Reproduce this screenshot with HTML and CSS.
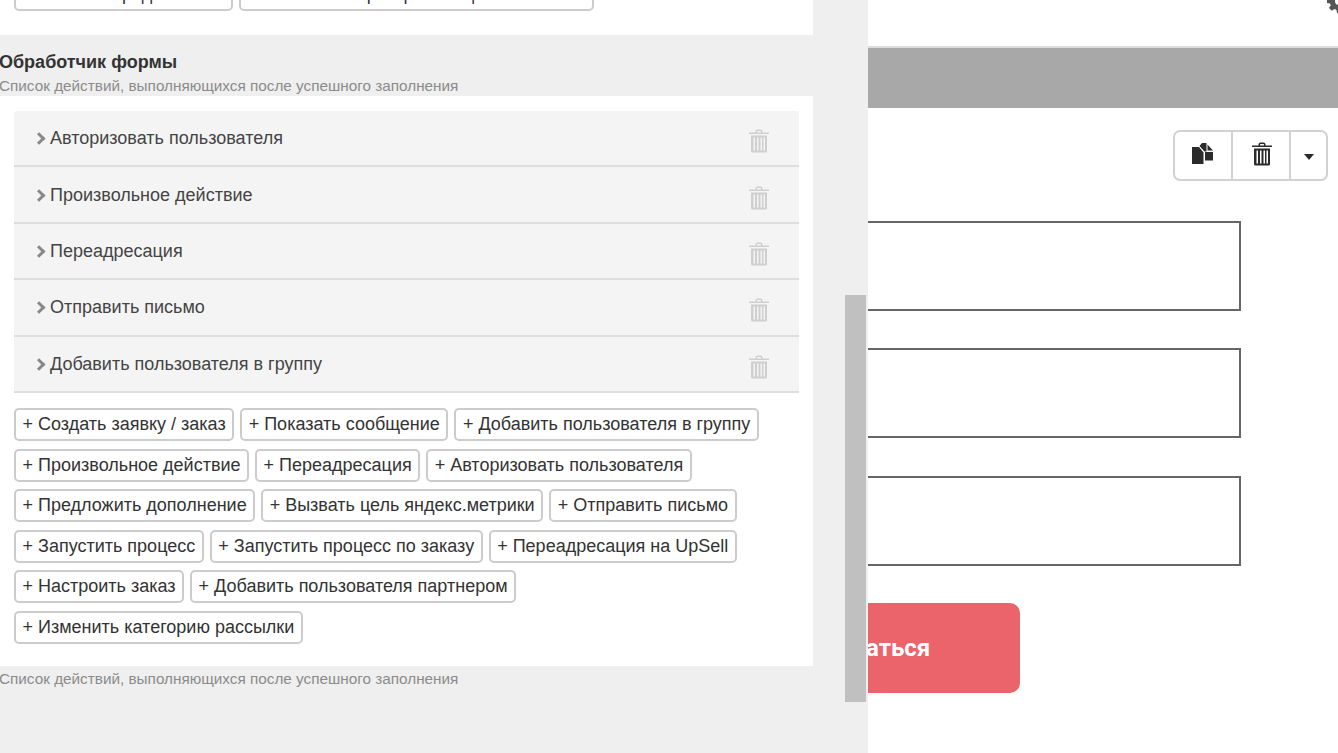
FILE: index.html
```html
<!DOCTYPE html>
<html lang="ru">
<head>
<meta charset="utf-8">
<title>Обработчик формы</title>
<link rel="stylesheet" href="styles.css">
</head>
<body>
<main class="page">
  <header class="topbar">
    <svg class="gear" viewBox="0 0 24 24"><path fill="#555" fill-rule="evenodd" d="M10 0h4l.6 3.2 1.9.8L19.200 2.200l2.800 2.800-1.800 2.700.8 1.900L24 10v4l-3.200.6-.8 1.900 1.800 2.700-2.800 2.800-2.700-1.800-1.900.8L14 24h-4l-.6-3.200-1.900-.8-2.700 1.800L2 19l1.800-2.700-.8-1.900L0 14v-4l3.200-.6.8-1.900L2 5l2.800-2.800L7.500 4l1.900-.8zM12 8a4 4 0 1 0 0 8 4 4 0 0 0 0-8z"/></svg>
  </header>
  <div class="band"></div>
  <section class="canvas">
    <div class="tools">
      <button class="tool tool-copy" type="button" aria-label="Копировать">
        <svg width="22" height="23" viewBox="0 0 22 23"><path fill="#2b2b2b" d="M0 5H7L11.500 10.500V22H0zM7.500 4L10 1H14.500V9.500H12.500zM15.500 2.500L21 8.500H15.500zM13 10H21V18.500H13z"/></svg>
      </button>
      <button class="tool tool-trash" type="button" aria-label="Удалить">
        <svg width="22" height="24" viewBox="0 0 22 24"><use href="#trash"/></svg>
      </button>
      <button class="tool tool-more" type="button" aria-label="Ещё"><span class="caret"></span></button>
    </div>
    <div class="fields">
      <div class="field"></div>
      <div class="field"></div>
      <div class="field"></div>
    </div>
    <button class="submit" type="button">Подписаться</button>
  </section>
</main>

<aside class="sidebar">
  <div class="sidebar-col">
    <div class="top-block">
      <button class="add" type="button">+ Условия предложения</button>
      <button class="add" type="button">+ Заголовок с раскрывающимся текстом</button>
    </div>
    <h2 class="title">Обработчик формы</h2>
    <p class="hint hint-top">Список действий, выполняющихся после успешного заполнения</p>
    <div class="panel">
      <ul class="actions">
        <li class="action"><span class="chev"></span><span class="action-name">Авторизовать пользователя</span><svg class="bin" width="22" height="24" viewBox="0 0 22 24"><use href="#trash"/></svg></li>
        <li class="action"><span class="chev"></span><span class="action-name">Произвольное действие</span><svg class="bin" width="22" height="24" viewBox="0 0 22 24"><use href="#trash"/></svg></li>
        <li class="action"><span class="chev"></span><span class="action-name">Переадресация</span><svg class="bin" width="22" height="24" viewBox="0 0 22 24"><use href="#trash"/></svg></li>
        <li class="action"><span class="chev"></span><span class="action-name">Отправить письмо</span><svg class="bin" width="22" height="24" viewBox="0 0 22 24"><use href="#trash"/></svg></li>
        <li class="action"><span class="chev"></span><span class="action-name">Добавить пользователя в группу</span><svg class="bin" width="22" height="24" viewBox="0 0 22 24"><use href="#trash"/></svg></li>
      </ul>
      <div class="adds">
        <button class="add" type="button">+ Создать заявку / заказ</button>
        <button class="add" type="button">+ Показать сообщение</button>
        <button class="add" type="button">+ Добавить пользователя в группу</button>
        <button class="add" type="button">+ Произвольное действие</button>
        <button class="add" type="button">+ Переадресация</button>
        <button class="add" type="button">+ Авторизовать пользователя</button>
        <button class="add" type="button">+ Предложить дополнение</button>
        <button class="add" type="button">+ Вызвать цель яндекс.метрики</button>
        <button class="add" type="button">+ Отправить письмо</button>
        <button class="add" type="button">+ Запустить процесс</button>
        <button class="add" type="button">+ Запустить процесс по заказу</button>
        <button class="add" type="button">+ Переадресация на UpSell</button>
        <button class="add" type="button">+ Настроить заказ</button>
        <button class="add" type="button">+ Добавить пользователя партнером</button>
        <button class="add" type="button">+ Изменить категорию рассылки</button>
      </div>
    </div>
    <p class="hint hint-bottom">Список действий, выполняющихся после успешного заполнения</p>
  </div>
  <div class="scroll-thumb"></div>
</aside>

<svg class="defs" width="0" height="0" aria-hidden="true">
  <symbol id="trash" viewBox="0 0 22 24">
    <path fill="currentColor" fill-rule="evenodd" d="M7.500 3.500V2.500Q7.500 .5 9.500 .5h3q2 0 2 2v1H21v1.600H1V3.500zM9 3.500h4V2.500q0-.6-.6-.6H9.600q-.6 0-.6.6zM3 6.500h16V22q0 1.500-1.500 1.500h-13Q3 23.500 3 22zM5.500 8.500v13h1.500v-13zM9 8.500v13h1.500v-13zM12.500 8.500v13H14v-13zM15.500 8.500v13H17v-13z"/>
  </symbol>
</svg>
</body>
</html>
```
FILE: styles.css
```css
* { box-sizing: border-box; }
html, body { margin: 0; height: 100%; overflow: hidden; background: #fff; }
body { font-family: "Liberation Sans", Arial, sans-serif; color: #333; }

.page { height: 753px; display: flex; flex-direction: column; }
.topbar { height: 48px; flex: none; position: relative; background: #fff; border-bottom: 2px solid #dcdcdc; overflow: hidden; }
.gear { position: absolute; right: -13px; top: -11px; width: 24px; height: 24px; }
.band { height: 60px; flex: none; background: #a8a8a8; }
.canvas { flex: 1; display: flex; flex-direction: column; position: relative; }

.tools { align-self: flex-end; margin: 22px 10px 0 0; height: 51px; width: 155px; display: flex; border: 2px solid #d2d2d2; border-radius: 7px; background: #fff; overflow: hidden; }
.tool { border: 0; padding: 0; background: none; display: flex; align-items: center; justify-content: center; color: #2b2b2b; }
.tool-copy { width: 58px; border-right: 2px solid #d2d2d2; padding-bottom: 5px; }
.tool-trash { width: 58px; border-right: 2px solid #d2d2d2; padding: 0 0 3px 2px; }
.tool-more { flex: 1; padding-top: 2px; }
.caret { width: 0; height: 0; border-left: 5.500px solid transparent; border-right: 5.500px solid transparent; border-top: 6px solid #2b2b2b; }

.fields { margin: 40px 0 0 600px; width: 641px; display: flex; flex-direction: column; gap: 37.400px; }
.field { height: 90px; border: 2px solid #666; background: #fff; }

.submit { margin: 37.200px 0 0 692px; width: 328px; height: 90px; border: 0; border-radius: 10px; background: #eb636b; color: #fff; font: 700 24px Roboto, sans-serif; }

.sidebar { position: absolute; left: 0; top: 0; width: 868px; height: 753px; background: #efefef; overflow: hidden; }
.sidebar-col { width: 813px; }
.top-block { height: 35px; background: #fff; display: flex; align-items: flex-end; gap: 6px; padding: 0 0 24px 14px; overflow: hidden; }
.top-block .add { flex: none; }
.title { margin: 18px 0 0 -1px; font-size: 18px; line-height: 18px; font-weight: 700; color: #333; }
.hint { margin: 0 0 0 -1px; font-size: 15.300px; line-height: 16px; color: #8b8b8b; }
.hint-top { margin-top: 7px; }
.panel { margin-top: 2px; height: 570px; padding: 15px 14px 0; background: #fff; }
.actions { list-style: none; margin: 0; padding: 0; }
.action { height: 56.400px; display: flex; align-items: center; padding: 1px 29px 0 22px; background: #f4f4f4; border-bottom: 2px solid #dedede; }
.action:first-child { border-radius: 3px 3px 0 0; }
.chev { width: 9px; height: 9px; margin-right: 5px; border-top: 3px solid #888; border-right: 3px solid #888; transform: rotate(45deg) translate(-1px, 1px); flex: none; }
.action-name { flex: 1; font-size: 18px; color: #444; }
.bin { color: #cfcfcf; flex: none; margin-top: 5px; }

.adds { margin-top: 15.500px; display: flex; flex-wrap: wrap; gap: 7.500px 6px; }
.add { height: 33px; padding: 0 6.500px; border: 2px solid #ccc; border-radius: 5px; background: #fff; font: 18px "Liberation Sans", Arial, sans-serif; color: #333; white-space: nowrap; }
.hint-bottom { margin-top: 5px; }

.scroll-thumb { position: absolute; left: 845px; top: 295px; width: 21px; height: 407px; background: #c0c0c0; }
.defs { position: absolute; }
```
